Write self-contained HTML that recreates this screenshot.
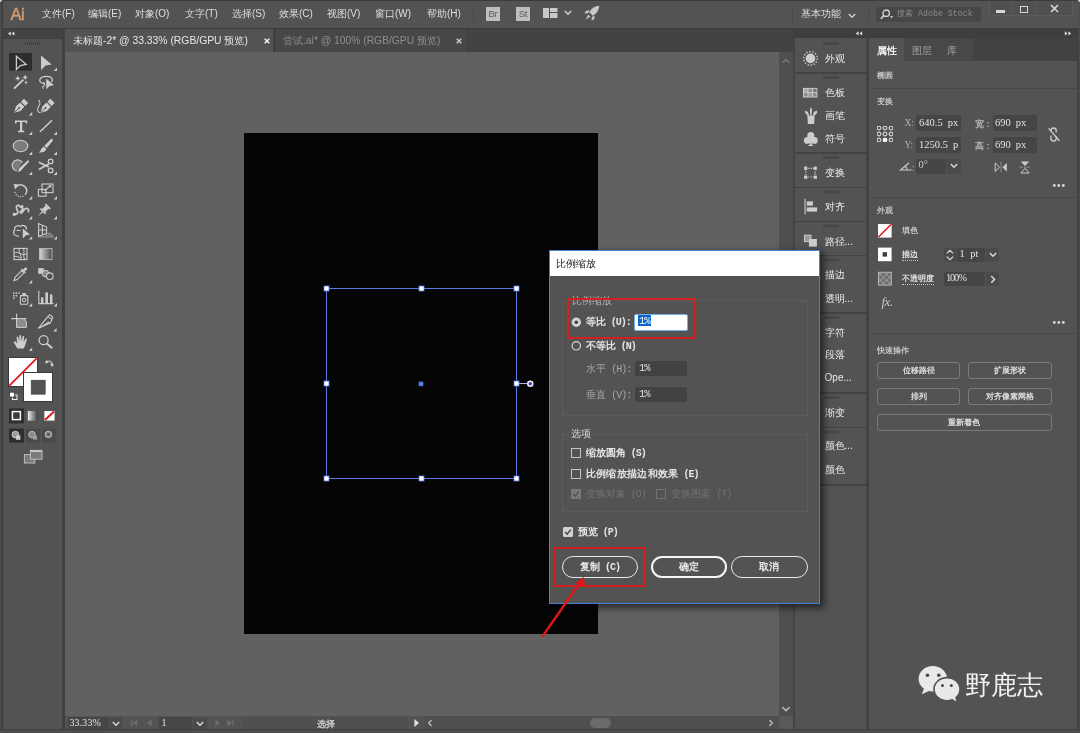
<!DOCTYPE html>
<html lang="zh">
<head>
<meta charset="utf-8">
<title>Illustrator - Scale</title>
<style>
*{box-sizing:border-box;margin:0;padding:0}
html,body{width:1080px;height:733px;overflow:hidden;background:#535353}
body{font-family:"Liberation Sans",sans-serif;font-size:11px;color:#d9d9d9;position:relative}
.a{position:absolute}
.t{position:absolute;white-space:nowrap;line-height:14px;height:14px;overflow:visible}
.sf{font-family:"Liberation Serif",serif}
.mono{font-family:"Liberation Mono",monospace}
#app{position:absolute;left:0;top:0;width:1080px;height:733px;background:transparent;overflow:hidden;will-change:transform}
/* menu */
#menubar{left:0;top:0;width:1080px;height:28px;background:#535353}
#menubar .t{top:7px;font-size:10px;color:#dedede}
/* tab bar */
#tabbar{left:65px;top:29px;width:728.200px;height:23.200px;background:#434343}
.tab{position:absolute;top:0;height:24px}
/* canvas */
#canvas{left:65px;top:52px;width:714px;height:664px;background:#616161}
#artboard{left:244px;top:133px;width:354px;height:501px;background:#050505}
/* toolbar */
#tools{left:3px;top:29px;width:60px;height:699px;background:#535353}
/* panels */
#iconpanel{left:794.500px;top:38px;width:71.500px;height:691px;background:#535353}
#props{left:869px;top:38px;width:208px;height:691px;background:#535353}
.sep{position:absolute;height:1px;background:#474747}
.fld{position:absolute;background:#454545;border-radius:2px}
.btn{position:absolute;border:1px solid #7a7a7a;border-radius:3px;height:17px;line-height:15px;text-align:center;font-size:8px;font-weight:bold;color:#e0e0e0;white-space:nowrap;overflow:hidden}

.hw{font-family:"Liberation Mono",monospace;font-size:10px;letter-spacing:-1px}
#dlgC .t{font-size:10.200px;font-weight:bold;color:#e4e4e4}
.cb{position:absolute;width:10px;height:10px;border:1px solid #c4c4c4}
.pill{position:absolute;height:21.500px;border-radius:11px;border:1.300px solid #e8e8e8;text-align:center;line-height:19px;font-size:10.200px;font-weight:bold;color:#e8e8e8;white-space:nowrap}
.gb{position:absolute;border:1px solid #5c5c5c}
/* dialog */
#dlg{left:549px;top:250px;width:271px;height:353.500px;background:#535353;border:1px solid #3b86cf;box-shadow:3px 3px 7px 1px rgba(0,0,0,.55)}
#dlgtitle{left:0;top:0;width:269px;height:25px;background:#ffffff}
</style>
</head>
<body>
<div id="app">

<!-- ============ MENU BAR ============ -->
<div id="menubar" class="a">

<div class="t" style="left:10.500px;top:5px;font-size:16.500px;line-height:18px;height:18px;color:#cf9d70;letter-spacing:-0.600px;-webkit-text-stroke:0.450px #cf9d70">Ai</div>
<div class="t" style="left:42px">文件(F)</div>
<div class="t" style="left:88px">编辑(E)</div>
<div class="t" style="left:135px">对象(O)</div>
<div class="t" style="left:185px">文字(T)</div>
<div class="t" style="left:232px">选择(S)</div>
<div class="t" style="left:279px">效果(C)</div>
<div class="t" style="left:327px">视图(V)</div>
<div class="t" style="left:375px">窗口(W)</div>
<div class="t" style="left:427px">帮助(H)</div>
<div class="a" style="left:473px;top:7px;width:1px;height:15px;background:#484848"></div>
<div class="a" style="left:486px;top:7px;width:14px;height:14px;background:#bebebe;color:#5a5a5a;font-size:9.500px;line-height:14px;text-align:center;letter-spacing:-0.300px">Br</div>
<div class="a" style="left:516px;top:7px;width:14px;height:14px;background:#bebebe;color:#5a5a5a;font-size:9.500px;line-height:14px;text-align:center;letter-spacing:-0.300px">St</div>
<svg class="a" style="left:543px;top:8px" width="15" height="10" viewBox="0 0 15 10"><rect x="0" y="0" width="6" height="10" fill="#c8c8c8"/><rect x="7" y="0" width="7.5" height="4" fill="#c8c8c8"/><rect x="7" y="5" width="7.5" height="5" fill="#c8c8c8"/></svg>
<svg class="a" style="left:564px;top:10px" width="8" height="6" viewBox="0 0 8 6"><path d="M0.8 1 L4 4.2 L7.2 1" fill="none" stroke="#d0d0d0" stroke-width="1.5"/></svg>
<svg class="a" style="left:584px;top:5px" width="16" height="16" viewBox="0 0 16 16"><path d="M15.2 0.8 C11 1 7.5 3 5.2 7.2 L8.8 10.8 C13 8.5 15 5 15.2 0.8 Z" fill="#c8c8c8"/><path d="M5.6 5.2 L1.8 6 L0.6 8.4 L4 8.2 Z" fill="#c8c8c8"/><path d="M10.8 10.4 L10 14.2 L7.6 15.4 L7.8 12 Z" fill="#c8c8c8"/><path d="M4.3 9.6 L1.6 14.4 L6.4 11.7 Z" fill="#c8c8c8"/></svg>
<div class="a" style="left:792px;top:7px;width:1px;height:15px;background:#484848"></div>
<div class="t" style="left:801px">基本功能</div>
<svg class="a" style="left:848px;top:13px" width="8" height="6" viewBox="0 0 8 6"><path d="M0.8 1 L4 4.2 L7.2 1" fill="none" stroke="#d0d0d0" stroke-width="1.5"/></svg>
<div class="a" style="left:868px;top:7px;width:1px;height:15px;background:#484848"></div>
<div class="a" style="left:876px;top:7px;width:105px;height:15px;background:#474747;border-radius:2px"></div>
<svg class="a" style="left:880px;top:9px" width="14" height="11" viewBox="0 0 14 11"><circle cx="6.2" cy="4.2" r="3.2" fill="none" stroke="#d0d0d0" stroke-width="1.4"/><path d="M3.8 6.6 L0.8 9.8" stroke="#d0d0d0" stroke-width="1.6" fill="none"/><path d="M9.8 7.2 L13.4 7.2 L11.6 9.2 Z" fill="#d0d0d0"/></svg>
<div class="t mono" style="left:897px;top:7px;font-size:8.3px;color:#8a8a8a">搜索 Adobe Stock</div>
<div class="a" style="left:989px;top:1px;width:83.500px;height:15px;border:1px solid #5b5b5b;border-top:none;background:#505050"></div><div class="a" style="left:1012px;top:1px;width:1px;height:14px;background:#5b5b5b"></div><div class="a" style="left:1036px;top:1px;width:1px;height:14px;background:#5b5b5b"></div>
<div class="a" style="left:996px;top:10.200px;width:9px;height:2.400px;background:#d6d6d6"></div>
<div class="a" style="left:1019.500px;top:6px;width:8.500px;height:6.500px;border:1.500px solid #d6d6d6"></div>
<svg class="a" style="left:1050px;top:4px" width="9" height="9" viewBox="0 0 9 9"><path d="M1 1 L8 8 M8 1 L1 8" stroke="#d6d6d6" stroke-width="1.7" fill="none"/></svg>

</div>
<div class="a" style="left:0;top:28px;width:1080px;height:1px;background:#3c3c3c"></div>

<!-- ============ TAB BAR ============ -->
<div id="tabbar" class="a">

<div class="tab" style="left:0;width:208px;background:#535353"></div>
<div class="t" style="left:8px;top:5px;font-size:10.35px;color:#e6e6e6">未标题-2* @ 33.33% (RGB/GPU 预览)</div>
<svg class="a" style="left:199px;top:9px" width="6" height="6" viewBox="0 0 6 6"><path d="M0.7 0.7 L5.3 5.3 M5.3 0.7 L0.7 5.3" stroke="#f0f0f0" stroke-width="1.5" fill="none"/></svg>
<div class="tab" style="left:208.500px;width:194.500px;background:#474747;border-left:1px solid #3c3c3c;border-right:1px solid #3c3c3c"></div>
<div class="t" style="left:218px;top:5px;font-size:10.3px;color:#8e8e8e">尝试.ai* @ 100% (RGB/GPU 预览)</div>
<svg class="a" style="left:391px;top:9px" width="6" height="6" viewBox="0 0 6 6"><path d="M0.7 0.7 L5.3 5.3 M5.3 0.7 L0.7 5.3" stroke="#c8c8c8" stroke-width="1.5" fill="none"/></svg>

</div>

<!-- ============ CANVAS ============ -->
<div id="canvas" class="a"></div>
<div id="artboard" class="a"></div>

<svg class="a" style="left:320px;top:282px" width="220" height="204" viewBox="320 282 220 204">
<rect x="326.5" y="288.5" width="190.0" height="190.0" fill="none" stroke="#5a78e6" stroke-width="1"/>
<path d="M519.0 383.5 H527.500" stroke="#a8b4e8" stroke-width="1"/>
<rect x="324.0" y="286.0" width="5" height="5" fill="#fff" stroke="#5a78e6" stroke-width="0.800"/><rect x="419.0" y="286.0" width="5" height="5" fill="#fff" stroke="#5a78e6" stroke-width="0.800"/><rect x="514.0" y="286.0" width="5" height="5" fill="#fff" stroke="#5a78e6" stroke-width="0.800"/><rect x="324.0" y="381.0" width="5" height="5" fill="#fff" stroke="#5a78e6" stroke-width="0.800"/><rect x="514.0" y="381.0" width="5" height="5" fill="#fff" stroke="#5a78e6" stroke-width="0.800"/><rect x="324.0" y="476.0" width="5" height="5" fill="#fff" stroke="#5a78e6" stroke-width="0.800"/><rect x="419.0" y="476.0" width="5" height="5" fill="#fff" stroke="#5a78e6" stroke-width="0.800"/><rect x="514.0" y="476.0" width="5" height="5" fill="#fff" stroke="#5a78e6" stroke-width="0.800"/>
<rect x="418.600" y="381.400" width="4.800" height="4.800" rx="1.500" fill="#5878ee"/>
<circle cx="530.300" cy="383.800" r="2.500" fill="#3048b0" stroke="#f0f0ff" stroke-width="1.500"/>
</svg>


<!-- ============ SCROLLBARS / STATUS ============ -->

<!-- vertical scrollbar -->
<div class="a" style="left:779px;top:52px;width:14.300px;height:664px;background:#4f4f4f"></div>
<svg class="a" style="left:781px;top:58px" width="10" height="6" viewBox="0 0 10 6"><path d="M1.800 4.600 L5 1.600 L8.200 4.600" fill="none" stroke="#7c7c7c" stroke-width="1.400"/></svg>
<svg class="a" style="left:781px;top:706px" width="10" height="6" viewBox="0 0 10 6"><path d="M1.400 1.200 L5 4.600 L8.600 1.200" fill="none" stroke="#bdbdbd" stroke-width="1.500"/></svg>
<!-- status bar -->
<div class="a" style="left:65px;top:716px;width:714px;height:13px;background:#535353"></div>
<div class="a" style="left:779px;top:715.500px;width:14.200px;height:13px;background:#595959"></div>
<div class="fld" style="left:67.500px;top:716.500px;width:41.500px;height:12.500px;background:#474747;border-radius:1px"></div>
<div class="t sf" style="left:69.500px;top:716px;font-size:10px;color:#e0e0e0;letter-spacing:0.100px">33.33%</div>
<div class="fld" style="left:110px;top:716.500px;width:11.500px;height:12.500px;background:#4a4a4a;border-radius:1px"></div>
<svg class="a" style="left:112px;top:721px" width="8" height="6" viewBox="0 0 8 6"><path d="M0.800 1 L4 4.200 L7.200 1" fill="none" stroke="#d8d8d8" stroke-width="1.500"/></svg>
<svg class="a" style="left:129px;top:718px" width="26" height="10" viewBox="0 0 26 10" fill="#6c6c6c"><rect x="2" y="1.500" width="1.400" height="7"/><path d="M8.200 1.500 V8.500 L3.800 5 Z"/><path d="M22.600 1.500 V8.500 L18.200 5 Z"/></svg>
<div class="fld" style="left:158.500px;top:716.500px;width:33.500px;height:12.500px;background:#474747;border-radius:1px"></div>
<div class="t sf" style="left:161.500px;top:716px;font-size:10px;color:#e0e0e0">1</div>
<div class="fld" style="left:193px;top:716.500px;width:14px;height:12.500px;background:#4a4a4a;border-radius:1px"></div>
<svg class="a" style="left:196px;top:721px" width="8" height="6" viewBox="0 0 8 6"><path d="M0.800 1 L4 4.200 L7.200 1" fill="none" stroke="#d8d8d8" stroke-width="1.500"/></svg>
<svg class="a" style="left:212px;top:718px" width="26" height="10" viewBox="0 0 26 10" fill="#6c6c6c"><path d="M3.400 1.500 V8.500 L7.800 5 Z"/><path d="M15.400 1.500 V8.500 L19.800 5 Z"/><rect x="20.400" y="1.500" width="1.400" height="7"/></svg>
<div class="a" style="left:242.500px;top:716.500px;width:165px;height:12.500px;background:#4f4f4f"></div>
<div class="t" style="left:316.500px;top:716.500px;font-size:8.500px;font-weight:bold;color:#d0d0d0">选择</div>
<svg class="a" style="left:413px;top:718px" width="7" height="10" viewBox="0 0 7 10"><path d="M1.400 1 V9 L6 5 Z" fill="#e0e0e0"/></svg>
<!-- horizontal scrollbar -->
<div class="a" style="left:424px;top:716px;width:355px;height:13px;background:#4f4f4f"></div>
<svg class="a" style="left:427px;top:718.500px" width="6" height="8" viewBox="0 0 6 8"><path d="M4.600 1 L1.600 4 L4.600 7" fill="none" stroke="#bdbdbd" stroke-width="1.300"/></svg>
<svg class="a" style="left:768px;top:718.500px" width="6" height="8" viewBox="0 0 6 8"><path d="M1.400 1 L4.400 4 L1.400 7" fill="none" stroke="#bdbdbd" stroke-width="1.300"/></svg>
<div class="a" style="left:589.500px;top:718px;width:21.500px;height:9.500px;border-radius:5px;background:#6b6b6b"></div>


<!-- ============ TOOLBAR ============ -->
<div class="a" style="left:3px;top:29px;width:60px;height:10px;background:#424242"></div>
<div id="tools" class="a" style="top:39px;height:689px">

</div>
<div class="a" style="left:62px;top:29px;width:3px;height:700px;background:#404040"></div>
<svg class="a" style="left:0;top:29px" width="66" height="460" viewBox="0 29 66 460">
<g fill="#cdcdcd" stroke="none">
<!-- header chevrons -->
<path d="M10.800 31.400 V35.800 L8 33.600 Z M14.400 31.400 V35.800 L11.600 33.600 Z" fill="#dcdcdc"/>
<!-- grip -->
<g fill="#3c3c3c"><rect x="25" y="42" width="1" height="3"/><rect x="27" y="42" width="1" height="3"/><rect x="29" y="42" width="1" height="3"/><rect x="31" y="42" width="1" height="3"/><rect x="33" y="42" width="1" height="3"/><rect x="35" y="42" width="1" height="3"/><rect x="37" y="42" width="1" height="3"/><rect x="39" y="42" width="1" height="3"/></g>
<!-- row1: selection (active) + direct selection -->
<rect x="9" y="53" width="23" height="17.6" fill="#2d2d2d"/>
<path d="M16.4 56.2 L26.2 64.3 L20.4 65.6 L16.4 69.4 Z" fill="none" stroke="#cdcdcd" stroke-width="1.3" stroke-linejoin="miter"/>
<path d="M41 55.6 L51.6 64.4 L45.6 65.6 L41 70 Z"/>
<path d="M57 67.6 L57 71 L53.6 71 Z" fill="#cdcdcd"/>
<!-- row2: magic wand + lasso -->
<path d="M14 88.6 L23.4 79.6" stroke="#cdcdcd" stroke-width="2" fill="none"/>
<path d="M17.8 75.6 l0.8 2 l2 0.8 l-2 0.8 l-0.8 2 l-0.8 -2 l-2 -0.8 l2 -0.8 Z"/>
<path d="M25.2 74.6 l0.8 2 l2 0.8 l-2 0.8 l-0.8 2 l-0.8 -2 l-2 -0.8 l2 -0.8 Z"/>
<path d="M26 80.6 l0.6 1.3 l1.3 0.6 l-1.3 0.6 l-0.6 1.3 l-0.6 -1.3 l-1.3 -0.6 l1.3 -0.6 Z"/>
<path d="M45 83.6 C41 83.6 39.4 81.6 39.8 79.8 C40.4 77.2 43.4 76.4 46.2 76.4 C49.6 76.4 52.4 77.6 52.4 80 C52.4 81 52 81.6 51.4 82" fill="none" stroke="#cdcdcd" stroke-width="1.3"/>
<path d="M43.2 82.2 C45 83 45 85.4 43.4 86.2 C42.6 86.6 42.4 87.6 43.4 88.6" fill="none" stroke="#cdcdcd" stroke-width="1.1"/>
<path d="M46.2 78.4 L54 85.2 L49.6 86 L46.2 89.6 Z"/>
<!-- row3: pen + curvature pen -->
<g transform="translate(14.2 112.8) rotate(-45)">
<path d="M0 0 L5.6 -3.2 L11.4 -3 L11.4 3 L5.6 3.2 Z"/>
<rect x="12.6" y="-3" width="4.2" height="6"/>
<path d="M0.8 0 L6.2 0" stroke="#535353" stroke-width="0.9"/><circle cx="6.8" cy="0" r="1" fill="#535353"/>
</g>
<path d="M32.2 112.0 L32.2 115.4 L28.800000000000004 115.4 Z" fill="#cdcdcd"/>
<g transform="translate(40.6 112.8) rotate(-45)">
<path d="M0 0 L5.6 -3.2 L11.4 -3 L11.4 3 L5.6 3.2 Z"/>
<rect x="12.6" y="-3" width="4.2" height="6"/>
<path d="M0.8 0 L6.2 0" stroke="#535353" stroke-width="0.9"/><circle cx="6.8" cy="0" r="1" fill="#535353"/>
</g>
<path d="M38.4 99.8 C41.4 102.8 39.6 105 38.2 107.4 C36.8 110 37.6 112.4 40.4 112.8" fill="none" stroke="#cdcdcd" stroke-width="1.1"/>
<!-- row4: type + line -->
<path d="M15 120.4 H27.2 V123.6 H26 L25.4 122 H22.2 V130.4 L24.2 130.8 V132.2 H18 V130.8 L20 130.4 V122 H16.8 L16.2 123.6 H15 Z"/>
<path d="M32.2 131.6 L32.2 135 L28.800000000000004 135 Z" fill="#cdcdcd"/>
<path d="M40 131.8 L52 120.2" stroke="#cdcdcd" stroke-width="1.5" fill="none"/>
<path d="M57 131.6 L57 135 L53.6 135 Z" fill="#cdcdcd"/>
<!-- row5: ellipse + brush -->
<ellipse cx="20.5" cy="146" rx="7.3" ry="5.8" fill="#7c7c7c" stroke="#cdcdcd" stroke-width="1.1"/>
<path d="M32.2 151.6 L32.2 155 L28.800000000000004 155 Z" fill="#cdcdcd"/>
<path d="M52.2 138.8 C53 139.6 53 140.4 52.4 141.2 L46.8 148 L44.4 145.8 L51 139 C51.4 138.6 51.8 138.6 52.2 138.8 Z"/>
<path d="M43.8 146.6 L46.2 148.8 C46 151.4 43.6 152.6 38.6 152.6 C41 151.2 41 148.2 43.8 146.6 Z"/>
<path d="M57 151.6 L57 155 L53.6 155 Z" fill="#cdcdcd"/>
<!-- row6: shaper + scissors -->
<path d="M22.4 162.4 A5.6 5.6 0 1 0 17 171" fill="#7c7c7c" stroke="#cdcdcd" stroke-width="1.2"/>
<path d="M18 172.4 L19 168.6 L27.6 160.4 C28.4 159.8 29.6 161 29 161.8 L20.8 170.8 Z"/>
<path d="M32.2 171.6 L32.2 175 L28.800000000000004 175 Z" fill="#cdcdcd"/>
<path d="M38.8 162.2 L48.8 167 M38.8 169.4 L48.8 164" stroke="#cdcdcd" stroke-width="1.7" fill="none"/>
<circle cx="50.6" cy="161.4" r="2.3" fill="none" stroke="#cdcdcd" stroke-width="1.3"/>
<circle cx="50.6" cy="170.4" r="2.3" fill="none" stroke="#cdcdcd" stroke-width="1.3"/>
<path d="M57 171.6 L57 175 L53.6 175 Z" fill="#cdcdcd"/>
<!-- row7: rotate + scale -->
<path d="M16.6 186.4 A6.2 6.2 0 0 1 26.8 190.4 A6.2 6.2 0 0 1 25 194.8" fill="none" stroke="#cdcdcd" stroke-width="1.5"/>
<path d="M13.6 184 L19 184.4 L15.2 189.4 Z"/>
<path d="M14.8 192 A6.2 6.2 0 0 0 24 195.8" fill="none" stroke="#cdcdcd" stroke-width="1.3" stroke-dasharray="1.2 1.2"/>
<path d="M32.2 196.0 L32.2 199.4 L28.800000000000004 199.4 Z" fill="#cdcdcd"/>
<rect x="42" y="184" width="11" height="8.6" fill="none" stroke="#cdcdcd" stroke-width="1.1"/>
<rect x="38.4" y="189.4" width="7.6" height="6.8" fill="none" stroke="#cdcdcd" stroke-width="1.1"/>
<path d="M44.6 190.8 L50 186" stroke="#cdcdcd" stroke-width="1.1" fill="none"/><path d="M51.4 184.8 L51 188 L48.4 185.4 Z"/>
<path d="M57 196.0 L57 199.4 L53.6 199.4 Z" fill="#cdcdcd"/>
<!-- row8: width + pin -->
<path d="M14.8 214 C17.6 214.4 18.4 212.6 17.4 210.4 C16.2 207.6 15.6 205.6 18 205.4 C20 205.2 20.2 207.4 21.6 207.6 C23.4 207.8 23.2 209.8 21.2 210.8 C19.4 211.8 20.2 213.8 22 212.6 C23.8 211.2 23.8 208.6 26.2 208.4 C28.4 208.2 28.8 210 28.4 212.4" fill="none" stroke="#cdcdcd" stroke-width="1.7"/>
<rect x="12.8" y="213" width="2.8" height="2.8"/>
<circle cx="22.2" cy="206.2" r="1.2"/>
<path d="M32.2 216.0 L32.2 219.4 L28.800000000000004 219.4 Z" fill="#cdcdcd"/>
<g transform="translate(38.2 216) rotate(-45)">
<path d="M0 0 L6 -0.8 L6 0.8 Z"/><rect x="6" y="-3.6" width="1.8" height="7.2"/><rect x="7.8" y="-2.2" width="4.6" height="4.4"/><rect x="12.4" y="-3.4" width="2" height="6.8"/>
</g>
<path d="M57 216.0 L57 219.4 L53.6 219.4 Z" fill="#cdcdcd"/>
<!-- row9: shape builder + perspective grid -->
<path d="M19 236 C14 236.6 12.4 232.6 14.6 230 C13.8 226.600 18 224.600 20.4 226.400 C23 224.200 27 226.200 26.400 229.600" fill="none" stroke="#cdcdcd" stroke-width="1.2"/>
<path d="M16.600 230.400 H20.600" stroke="#cdcdcd" stroke-width="1" fill="none"/>
<path d="M22.800 228.400 L30 234.400 L26 235.200 L22.800 238.600 Z"/>
<path d="M32.2 236.2 L32.2 239.6 L28.800000000000004 239.6 Z" fill="#cdcdcd"/>
<path d="M38.600 223.600 V236.600 L46.600 233.200 V227 Z M38.600 230 L46.600 230 M42.400 225.400 V234.800" fill="none" stroke="#cdcdcd" stroke-width="1.1"/>
<path d="M47 233.400 H51 M45 235.200 H53 M40 237 H54" stroke="#a8a8a8" stroke-width="0.9" fill="none"/>
<path d="M57 236.2 L57 239.6 L53.6 239.6 Z" fill="#cdcdcd"/>
<!-- row10: mesh + gradient -->
<rect x="14" y="248.400" width="13" height="11.200" fill="none" stroke="#cdcdcd" stroke-width="1.1"/>
<path d="M14 253 C18 250.400 22 256.800 27 253.600 M19.600 248.400 C17.200 252.400 22.800 255.600 20.600 259.600 M23.400 248.400 C25.200 251.200 22.400 255.200 24.600 259.600 M14 256.600 C17 255.200 18.400 258 20.600 257.400" fill="none" stroke="#cdcdcd" stroke-width="1"/>
<rect x="39.400" y="248.600" width="12.600" height="10.800" fill="url(#gr1)" stroke="#bdbdbd" stroke-width="0.9"/>
<!-- row11: eyedropper + blend -->
<path d="M14 280.600 L15 277.400 L21.800 270.600 L24 272.800 L17.200 279.600 Z" fill="none" stroke="#cdcdcd" stroke-width="1.1"/>
<path d="M21 269.400 L25.200 273.600 L26 272.800 L24.800 271.600 L27 269.400 C27.800 268.400 26.200 266.800 25.200 267.600 L23 269.800 L21.800 268.600 Z"/>
<path d="M32.2 280.0 L32.2 283.4 L28.800000000000004 283.4 Z" fill="#cdcdcd"/>
<rect x="38.200" y="268.200" width="5.600" height="5.600"/>
<circle cx="45.400" cy="273.600" r="3.300" fill="#8a8a8a" stroke="#cdcdcd" stroke-width="1"/>
<circle cx="49.800" cy="276.200" r="3.300" fill="#535353" stroke="#cdcdcd" stroke-width="1.1"/>
<!-- row12: symbol sprayer + graph -->
<rect x="20.400" y="295.600" width="7.400" height="8.600" rx="0.800" fill="none" stroke="#cdcdcd" stroke-width="1.1"/>
<rect x="22.400" y="293" width="3.400" height="2"/>
<circle cx="24.100" cy="300" r="1.800" fill="none" stroke="#cdcdcd" stroke-width="1"/>
<g><rect x="13" y="292.400" width="1.500" height="1.500"/><rect x="15.600" y="292.400" width="1.500" height="1.500"/><rect x="18.200" y="292.400" width="1.500" height="1.500"/><rect x="13" y="295" width="1.500" height="1.500"/><rect x="15.600" y="295" width="1.500" height="1.500"/><rect x="13" y="297.600" width="1.500" height="1.500"/></g>
<path d="M32.2 303.0 L32.2 306.4 L28.800000000000004 306.4 Z" fill="#cdcdcd"/>
<path d="M38.800 290.800 V303.600 H53.400" fill="none" stroke="#cdcdcd" stroke-width="1.100"/>
<rect x="41" y="297.400" width="2.400" height="6"/><rect x="45.400" y="292.400" width="2.600" height="11"/><rect x="50" y="294.400" width="2.400" height="9"/>
<path d="M57 303.0 L57 306.4 L53.6 306.4 Z" fill="#cdcdcd"/>
<!-- row13: artboard + slice -->
<path d="M16.600 313.800 V327.400 M11.200 318.600 H26.400" stroke="#cdcdcd" stroke-width="1.100" fill="none"/>
<path d="M16.600 318.600 H23.400 L26.400 321.600 V327.400 H16.600 Z" fill="#8c8c8c" stroke="#cdcdcd" stroke-width="1"/>
<path d="M38.600 328.200 L47.800 316.600 L52 319.400 L50.200 323 Z M47.800 316.600 L49.600 314.600 L52.600 316.800 L52 319.400" fill="none" stroke="#cdcdcd" stroke-width="1.100" stroke-linejoin="round"/>
<path d="M38.600 328.200 L50.200 323 L48.400 321.400 Z"/>
<path d="M56.6 328.0 L56.6 331.4 L53.2 331.4 Z" fill="#cdcdcd"/>
<!-- row14: hand + zoom -->
<path d="M17.400 348.400 C16 346 14.400 343.600 13.800 342.400 C13.400 341.400 14.600 340.800 15.400 341.600 L17.200 343.600 L16.600 337.400 C16.600 336.200 18.200 336.200 18.400 337.400 L19.200 341.400 L19.400 335.800 C19.400 334.600 21.200 334.600 21.200 335.800 L21.400 341.400 L22.600 336.600 C22.800 335.400 24.400 335.800 24.200 337 L23.600 342 L25.400 339 C26 338 27.400 338.600 26.800 339.800 C25.800 342.600 25.400 346 23.600 348.400 Z"/>
<path d="M32.2 347.6 L32.2 351 L28.800000000000004 351 Z" fill="#cdcdcd"/>
<circle cx="43.600" cy="340.200" r="4.500" fill="none" stroke="#cdcdcd" stroke-width="1.300"/>
<path d="M46.800 343.400 L52.200 348.200" stroke="#cdcdcd" stroke-width="2" fill="none"/>
</g>
<defs><linearGradient id="gr1" x1="0" y1="0" x2="1" y2="0"><stop offset="0" stop-color="#d8d8d8"/><stop offset="1" stop-color="#4a4a4a"/></linearGradient>
<linearGradient id="gr2" x1="0" y1="0" x2="1" y2="0"><stop offset="0" stop-color="#f0f0f0"/><stop offset="1" stop-color="#3a3a3a"/></linearGradient></defs>
<!-- fill / stroke swatches -->
<rect x="8.500" y="357.500" width="29" height="29" fill="#ffffff" stroke="#3a3a3a" stroke-width="1"/>
<path d="M9.400 385.600 L36.600 358.400" stroke="#e0191c" stroke-width="1.800" fill="none"/>
<rect x="23.500" y="372.500" width="29" height="29" fill="#ffffff" stroke="#3a3a3a" stroke-width="1"/>
<rect x="31.200" y="380.200" width="14" height="14" fill="#535353" stroke="#3a3a3a" stroke-width="0.600"/>
<!-- swap arrows -->
<path d="M46.600 362.400 C47.600 360.400 50.400 360.600 51.400 362.600 L52 364.400" fill="none" stroke="#cdcdcd" stroke-width="1.200"/>
<path d="M45 363.400 L46.400 359.800 L48.800 362.800 Z" fill="#cdcdcd"/><path d="M50 364.200 L53.800 363.600 L52.400 367.200 Z" fill="#cdcdcd"/>
<!-- default colors mini -->
<rect x="12.500" y="395" width="4.500" height="4.500" fill="#535353" stroke="#f0f0f0" stroke-width="1"/>
<rect x="9.600" y="392.200" width="4.800" height="4.800" fill="#ffffff" stroke="#2d2d2d" stroke-width="0.700"/>
<!-- color mode row -->
<rect x="9" y="408.400" width="15" height="15" fill="#2d2d2d"/>
<rect x="12.400" y="411.600" width="8" height="8" fill="#3a3a3a" stroke="#f4f4f4" stroke-width="1.500"/>
<rect x="27.800" y="411" width="10.200" height="9.600" fill="url(#gr2)"/>
<rect x="44.400" y="411" width="10.200" height="9.600" fill="#ffffff"/>
<path d="M45 420 L54 411.600" stroke="#e0191c" stroke-width="2" fill="none"/>
<!-- draw modes -->
<rect x="9" y="428.600" width="15" height="14" fill="#2d2d2d"/>
<rect x="26" y="428.600" width="14" height="14" fill="#4a4a4a"/><rect x="42" y="428.600" width="14" height="14" fill="#4a4a4a"/>
<circle cx="15.400" cy="434.600" r="3.300" fill="#9a9a9a" stroke="#cdcdcd" stroke-width="1"/><rect x="16" y="435.400" width="4.400" height="4.400" fill="#cdcdcd"/>
<circle cx="32" cy="434.600" r="3.300" fill="#8a8a8a" stroke="#b8b8b8" stroke-width="1"/><rect x="33" y="435.600" width="4" height="4" fill="#9c9c9c"/>
<circle cx="48.400" cy="434.400" r="3.300" fill="#8a8a8a" stroke="#b8b8b8" stroke-width="1"/><circle cx="48.400" cy="434.400" r="1.300" fill="#555"/>
<!-- screen mode -->
<rect x="24.400" y="454.600" width="10.400" height="8.400" fill="#7a7a7a" stroke="#bdbdbd" stroke-width="1"/>
<rect x="30.400" y="450.400" width="11.600" height="8.800" fill="#7a7a7a" stroke="#bdbdbd" stroke-width="1"/>
<path d="M30.400 451.200 H42" stroke="#cfcfcf" stroke-width="1.400"/>
</svg>


<!-- ============ RIGHT PANELS ============ -->
<div class="a" style="left:793.200px;top:29px;width:287px;height:9.600px;background:#3e3e3e"></div>
<div class="a" style="left:793.200px;top:38px;width:1.400px;height:691px;background:#444"></div>
<div id="iconpanel" class="a">
<div class="a" style="left:0;top:34.0px;width:72px;height:1.5px;background:#424242"></div>
<div class="a" style="left:0;top:114.0px;width:72px;height:1.5px;background:#424242"></div>
<div class="a" style="left:0;top:148.5px;width:72px;height:1.5px;background:#424242"></div>
<div class="a" style="left:0;top:182.5px;width:72px;height:1.5px;background:#424242"></div>
<div class="a" style="left:0;top:216.5px;width:72px;height:1.5px;background:#424242"></div>
<div class="a" style="left:0;top:274.0px;width:72px;height:1.5px;background:#424242"></div>
<div class="a" style="left:0;top:354.0px;width:72px;height:1.5px;background:#424242"></div>
<div class="a" style="left:0;top:388.5px;width:72px;height:1.5px;background:#424242"></div>
<div class="a" style="left:0;top:446.0px;width:72px;height:1.5px;background:#424242"></div>
<div class="t" style="left:30.100px;top:13.5px;font-size:10px;color:#ececec">外观</div>
<div class="t" style="left:30.100px;top:47.5px;font-size:10px;color:#ececec">色板</div>
<div class="t" style="left:30.100px;top:70.7px;font-size:10px;color:#ececec">画笔</div>
<div class="t" style="left:30.100px;top:94.3px;font-size:10px;color:#ececec">符号</div>
<div class="t" style="left:30.100px;top:128.0px;font-size:10px;color:#ececec">变换</div>
<div class="t" style="left:30.100px;top:162.0px;font-size:10px;color:#ececec">对齐</div>
<div class="t" style="left:30.100px;top:196.5px;font-size:10px;color:#ececec">路径...</div>
<div class="t" style="left:30.100px;top:230.4px;font-size:10px;color:#ececec">描边</div>
<div class="t" style="left:30.100px;top:253.5px;font-size:10px;color:#ececec">透明...</div>
<div class="t" style="left:30.100px;top:288.0px;font-size:10px;color:#ececec">字符</div>
<div class="t" style="left:30.100px;top:310.0px;font-size:10px;color:#ececec">段落</div>
<div class="t" style="left:30.100px;top:333.0px;font-size:10px;color:#ececec">Ope...</div>
<div class="t" style="left:30.100px;top:367.7px;font-size:10px;color:#ececec">渐变</div>
<div class="t" style="left:30.100px;top:401.0px;font-size:10px;color:#ececec">颜色...</div>
<div class="t" style="left:30.100px;top:425.0px;font-size:10px;color:#ececec">颜色</div>
<svg class="a" style="left:0;top:0" width="72" height="460" viewBox="794.5 38 72 460">
<g fill="#3c3c3c"><rect x="823" y="42" width="1" height="3"/><rect x="825" y="42" width="1" height="3"/><rect x="827" y="42" width="1" height="3"/><rect x="829" y="42" width="1" height="3"/><rect x="831" y="42" width="1" height="3"/><rect x="833" y="42" width="1" height="3"/><rect x="835" y="42" width="1" height="3"/><rect x="837" y="42" width="1" height="3"/></g><g fill="#3c3c3c"><rect x="823" y="76" width="1" height="3"/><rect x="825" y="76" width="1" height="3"/><rect x="827" y="76" width="1" height="3"/><rect x="829" y="76" width="1" height="3"/><rect x="831" y="76" width="1" height="3"/><rect x="833" y="76" width="1" height="3"/><rect x="835" y="76" width="1" height="3"/><rect x="837" y="76" width="1" height="3"/></g><g fill="#3c3c3c"><rect x="823" y="156" width="1" height="3"/><rect x="825" y="156" width="1" height="3"/><rect x="827" y="156" width="1" height="3"/><rect x="829" y="156" width="1" height="3"/><rect x="831" y="156" width="1" height="3"/><rect x="833" y="156" width="1" height="3"/><rect x="835" y="156" width="1" height="3"/><rect x="837" y="156" width="1" height="3"/></g><g fill="#3c3c3c"><rect x="823" y="190.5" width="1" height="3"/><rect x="825" y="190.5" width="1" height="3"/><rect x="827" y="190.5" width="1" height="3"/><rect x="829" y="190.5" width="1" height="3"/><rect x="831" y="190.5" width="1" height="3"/><rect x="833" y="190.5" width="1" height="3"/><rect x="835" y="190.5" width="1" height="3"/><rect x="837" y="190.5" width="1" height="3"/></g><g fill="#3c3c3c"><rect x="823" y="224.5" width="1" height="3"/><rect x="825" y="224.5" width="1" height="3"/><rect x="827" y="224.5" width="1" height="3"/><rect x="829" y="224.5" width="1" height="3"/><rect x="831" y="224.5" width="1" height="3"/><rect x="833" y="224.5" width="1" height="3"/><rect x="835" y="224.5" width="1" height="3"/><rect x="837" y="224.5" width="1" height="3"/></g><g fill="#3c3c3c"><rect x="823" y="258.5" width="1" height="3"/><rect x="825" y="258.5" width="1" height="3"/><rect x="827" y="258.5" width="1" height="3"/><rect x="829" y="258.5" width="1" height="3"/><rect x="831" y="258.5" width="1" height="3"/><rect x="833" y="258.5" width="1" height="3"/><rect x="835" y="258.5" width="1" height="3"/><rect x="837" y="258.5" width="1" height="3"/></g><g fill="#3c3c3c"><rect x="823" y="316" width="1" height="3"/><rect x="825" y="316" width="1" height="3"/><rect x="827" y="316" width="1" height="3"/><rect x="829" y="316" width="1" height="3"/><rect x="831" y="316" width="1" height="3"/><rect x="833" y="316" width="1" height="3"/><rect x="835" y="316" width="1" height="3"/><rect x="837" y="316" width="1" height="3"/></g><g fill="#3c3c3c"><rect x="823" y="396" width="1" height="3"/><rect x="825" y="396" width="1" height="3"/><rect x="827" y="396" width="1" height="3"/><rect x="829" y="396" width="1" height="3"/><rect x="831" y="396" width="1" height="3"/><rect x="833" y="396" width="1" height="3"/><rect x="835" y="396" width="1" height="3"/><rect x="837" y="396" width="1" height="3"/></g><g fill="#3c3c3c"><rect x="823" y="430.5" width="1" height="3"/><rect x="825" y="430.5" width="1" height="3"/><rect x="827" y="430.5" width="1" height="3"/><rect x="829" y="430.5" width="1" height="3"/><rect x="831" y="430.5" width="1" height="3"/><rect x="833" y="430.5" width="1" height="3"/><rect x="835" y="430.5" width="1" height="3"/><rect x="837" y="430.5" width="1" height="3"/></g>
<g fill="#cdcdcd">
<!-- appearance -->
<circle cx="810" cy="58.4" r="4.800"/>
<circle cx="810" cy="58.4" r="6.800" fill="none" stroke="#cdcdcd" stroke-width="1.400" stroke-dasharray="1.400 1.650"/>
<!-- swatches -->
<rect x="803" y="88.400" width="13.400" height="8.600" fill="#8a8a8a" stroke="#cdcdcd" stroke-width="1"/>
<rect x="803.500" y="88.900" width="4" height="3.600" fill="#a8a8a8"/><rect x="812" y="88.900" width="4" height="3.600" fill="#777"/><rect x="807.500" y="92.600" width="4.400" height="4" fill="#9c9c9c"/>
<path d="M803 92.600 H816.400 M807.500 88.400 V97 M812 88.400 V97" stroke="#cdcdcd" stroke-width="0.900" fill="none"/>
<!-- brushes -->
<path d="M806.800 115.400 H814.200 L813.600 124 H807.400 Z"/>
<path d="M810.400 107 L811.600 110 L811 115.400 H809.800 L809.400 110 Z"/>
<path d="M805 110.400 L807.400 112 L808.800 115.400 L806.800 115.400 L804.600 112.400 Z"/>
<path d="M816.400 110.600 L813.600 111.800 L812.200 115.400 L814.200 115.400 L816.800 112.800 Z"/>
<!-- club -->
<circle cx="810.300" cy="135.600" r="3.500"/><circle cx="806.800" cy="140.400" r="3.400"/><circle cx="813.800" cy="140.400" r="3.400"/>
<path d="M809.700 139 H810.900 L811.300 144.600 L813.400 146 H807.200 L809.300 144.600 Z"/>
<!-- transform -->
<rect x="805.400" y="168.400" width="9.200" height="8.600" fill="none" stroke="#cdcdcd" stroke-width="1.200" stroke-dasharray="1.200 1.200"/>
<rect x="803.600" y="166.600" width="3.200" height="3.200"/><rect x="813.200" y="166.600" width="3.200" height="3.200"/><rect x="803.600" y="175.600" width="3.200" height="3.200"/><rect x="813.200" y="175.600" width="3.200" height="3.200"/>
<!-- align -->
<rect x="804" y="198.800" width="1.100" height="15.600"/>
<rect x="806.200" y="201.400" width="6.200" height="4.200"/><rect x="806.200" y="207.400" width="10.400" height="4.200"/>
<!-- pathfinder -->
<rect x="804" y="235.200" width="6.400" height="6.400" fill="#9a9a9a" stroke="#cdcdcd" stroke-width="1"/>
<rect x="808.400" y="239" width="8" height="7.600"/>
</g>
</svg>
</div>
<div class="a" style="left:866px;top:38px;width:3px;height:691px;background:#424242"></div>
<div id="props" class="a">

</div>
<div class="a" style="left:1076.700px;top:29px;width:2px;height:704px;background:#424242"></div><div class="a" style="left:1078.600px;top:1px;width:1.400px;height:732px;background:#4d4d4d"></div>


<div id="propsC" class="a" style="left:0;top:0;width:1080px;height:733px">
<!-- tab strip -->
<div class="a" style="left:869px;top:38px;width:208px;height:23.200px;background:#424242"></div>
<div class="a" style="left:869px;top:38px;width:34.500px;height:23.200px;background:#535353"></div>
<div class="a" style="left:904px;top:39px;width:35.500px;height:22.200px;background:#484848"></div>
<div class="a" style="left:940px;top:39px;width:32.500px;height:22.200px;background:#484848"></div>
<div class="t" style="left:877px;top:43.500px;font-size:10px;color:#f0f0f0;font-weight:bold">属性</div>
<div class="t" style="left:911.500px;top:43.500px;font-size:10px;color:#a4a4a4">图层</div>
<div class="t" style="left:947px;top:43.500px;font-size:10px;color:#a4a4a4">库</div>
<svg class="a" style="left:855px;top:30px" width="8" height="7" viewBox="0 0 8 7"><path d="M3.600 1.200 V5.600 L0.800 3.400 Z M7.200 1.200 V5.600 L4.400 3.400 Z" fill="#dcdcdc"/></svg>
<svg class="a" style="left:1064px;top:30px" width="8" height="7" viewBox="0 0 8 7"><path d="M0.800 1.200 V5.600 L3.600 3.400 Z M4.400 1.200 V5.600 L7.200 3.400 Z" fill="#dcdcdc"/></svg>
<!-- section: object type -->
<div class="t" style="left:877px;top:69px;font-size:8px;font-weight:bold;color:#c4c4c4">椭圆</div>
<div class="sep" style="left:870px;top:88px;width:207px"></div>
<!-- section: transform -->
<div class="t" style="left:877px;top:94.500px;font-size:8px;font-weight:bold;color:#c4c4c4">变换</div>
<svg class="a" style="left:876px;top:125px" width="18" height="18" viewBox="876 125 18 18" fill="none" stroke="#cdcdcd" stroke-width="0.900">
<rect x="877.500" y="126.500" width="3" height="3"/><rect x="883.500" y="126.500" width="3" height="3"/><rect x="889.500" y="126.500" width="3" height="3"/>
<rect x="877.500" y="132.500" width="3" height="3"/><rect x="883.500" y="132.500" width="3" height="3"/><rect x="889.500" y="132.500" width="3" height="3"/>
<rect x="877.500" y="138.500" width="3" height="3"/><rect x="883.500" y="138.500" width="3" height="3" fill="#f4f4f4" stroke="#f4f4f4"/><rect x="889.500" y="138.500" width="3" height="3"/>
<path d="M880.500 128 H883.500 M886.500 128 H889.500 M880.500 134 H883.500 M886.500 134 H889.500 M880.500 140 H883.500 M886.500 140 H889.500 M879 129.500 V132.500 M879 135.500 V138.500 M885 129.500 V132.500 M885 135.500 V138.500 M891 129.500 V132.500 M891 135.500 V138.500" stroke-width="0.700"/>
</svg>
<div class="t sf" style="left:904.500px;top:116px;font-size:9.500px;color:#b4b4b4">X:</div>
<div class="fld" style="left:916px;top:115px;width:45px;height:15.500px"></div>
<div class="t sf" style="left:919px;top:115.500px;font-size:10.500px;color:#e4e4e4;word-spacing:2.400px">640.5 px</div>
<div class="t sf" style="left:904.500px;top:138px;font-size:9.500px;color:#b4b4b4">Y:</div>
<div class="fld" style="left:916px;top:137px;width:45px;height:15.500px;overflow:hidden"></div>
<div class="t sf" style="left:919px;top:137.500px;font-size:10.500px;color:#e4e4e4;word-spacing:2.400px;width:42px;overflow:hidden">1250.5 p</div>
<div class="t" style="left:975px;top:116.500px;font-size:9px;color:#b4b4b4;font-weight:bold">宽 :</div>
<div class="fld" style="left:992.500px;top:115px;width:44.500px;height:15.500px"></div>
<div class="t sf" style="left:995px;top:115.500px;font-size:10.500px;color:#e4e4e4;word-spacing:2.400px">690 px</div>
<div class="t" style="left:975px;top:138.500px;font-size:9px;color:#b4b4b4;font-weight:bold">高 :</div>
<div class="fld" style="left:992.500px;top:137px;width:44.500px;height:15.500px"></div>
<div class="t sf" style="left:995px;top:137.500px;font-size:10.500px;color:#e4e4e4;word-spacing:2.400px">690 px</div>
<svg class="a" style="left:1046px;top:126px" width="16" height="18" viewBox="1046 126 16 18" fill="none" stroke="#cdcdcd" stroke-width="1.300">
<path d="M1051 131.600 V130.600 a2.600 2.600 0 0 1 5.200 0 V132.400"/><path d="M1056.200 136.600 V138.400 a2.600 2.600 0 0 1 -5.200 0 V135.400"/><path d="M1048.600 128.400 L1059.400 140.800"/>
</svg>
<svg class="a" style="left:899px;top:161px" width="14" height="11" viewBox="899 161 14 11" fill="none" stroke="#cdcdcd" stroke-width="1.100"><path d="M909 163 L900.400 170 H911.600"/><path d="M905.200 166.200 A5 5 0 0 1 907.200 170"/></svg>
<div class="t sf" style="left:912px;top:160.500px;font-size:9.500px;color:#b4b4b4">:</div>
<div class="fld" style="left:916px;top:158.500px;width:29.500px;height:15.500px;border-radius:2px 0 0 2px"></div>
<div class="fld" style="left:946.500px;top:158.500px;width:14.500px;height:15.500px;border-radius:0 2px 2px 0;background:#4a4a4a"></div>
<div class="t sf" style="left:918.500px;top:158px;font-size:10.500px;color:#c8c8c8">0°</div>
<svg class="a" style="left:950px;top:163px" width="8" height="6" viewBox="0 0 8 6"><path d="M0.800 1 L4 4.200 L7.200 1" fill="none" stroke="#d8d8d8" stroke-width="1.500"/></svg>
<svg class="a" style="left:994px;top:160px" width="40" height="15" viewBox="994 160 40 15" fill="#cdcdcd">
<path d="M995.200 163 L999.600 167.200 L995.200 171.400 Z" fill="none" stroke="#cdcdcd" stroke-width="1"/><path d="M1006.800 163 L1002.400 167.200 L1006.800 171.400 Z"/><path d="M1001 162 V172.400" stroke="#cdcdcd" stroke-width="0.800" stroke-dasharray="1.200 1"/>
<path d="M1020.800 161.400 H1029.200 L1025 166 Z"/><path d="M1020.800 173 H1029.200 L1025 168.400 Z" fill="none" stroke="#cdcdcd" stroke-width="1"/><path d="M1019.600 167.200 H1030.400" stroke="#cdcdcd" stroke-width="0.800" stroke-dasharray="1.200 1"/>
</svg>
<svg class="a" style="left:1052px;top:183px" width="14" height="5" viewBox="0 0 14 5" fill="#d4d4d4"><circle cx="2.300" cy="2.500" r="1.450"/><circle cx="6.800" cy="2.500" r="1.450"/><circle cx="11.300" cy="2.500" r="1.450"/></svg>
<div class="sep" style="left:870px;top:196.500px;width:207px"></div>
<!-- section: appearance -->
<div class="t" style="left:877px;top:203.500px;font-size:8px;font-weight:bold;color:#c4c4c4">外观</div>
<svg class="a" style="left:877px;top:223px" width="16" height="64" viewBox="877 223 16 64">
<rect x="878" y="224" width="13.600" height="13.600" fill="#fff"/><path d="M878.300 237.300 L891.300 224.300" stroke="#e0191c" stroke-width="1.500"/>
<rect x="878" y="247.600" width="13.600" height="13.600" fill="#fff"/><rect x="882.600" y="252.200" width="4.400" height="4.400" fill="#3c3c3c"/>
<rect x="878.500" y="272.300" width="12.800" height="12.800" fill="#6e6e6e" stroke="#b8b8b8" stroke-width="1"/>
<g fill="#8e8e8e"><rect x="879" y="272.800" width="3" height="3"/><rect x="885" y="272.800" width="3" height="3"/><rect x="882" y="275.800" width="3" height="3"/><rect x="888" y="275.800" width="2.800" height="3"/><rect x="879" y="278.800" width="3" height="3"/><rect x="885" y="278.800" width="3" height="3"/><rect x="882" y="281.800" width="3" height="2.800"/><rect x="888" y="281.800" width="2.800" height="2.800"/></g>
</svg>
<div class="t" style="left:902px;top:224px;font-size:8px;font-weight:bold;color:#c4c4c4">填色</div>
<div class="t" style="left:902px;top:248px;font-size:8px;font-weight:bold;color:#e0e0e0;border-bottom:1px dotted #c0c0c0;height:13px;line-height:13px">描边</div>
<div class="fld" style="left:943.500px;top:247.500px;width:12.500px;height:14.500px;background:#4a4a4a;border-radius:2px 0 0 2px"></div>
<svg class="a" style="left:945px;top:249px" width="10" height="12" viewBox="0 0 10 12" fill="none" stroke="#d8d8d8" stroke-width="1.300"><path d="M1.800 4.400 L5 1.400 L8.200 4.400 M1.800 7.600 L5 10.600 L8.200 7.600"/></svg>
<div class="fld" style="left:957px;top:247.500px;width:27.500px;height:14.500px;border-radius:0"></div>
<div class="t sf" style="left:959.500px;top:247px;font-size:10.500px;color:#e4e4e4;word-spacing:2.800px">1 pt</div>
<div class="fld" style="left:985.500px;top:247.500px;width:13.500px;height:14.500px;background:#4a4a4a;border-radius:0 2px 2px 0"></div>
<svg class="a" style="left:988.500px;top:252px" width="8" height="6" viewBox="0 0 8 6"><path d="M0.800 1 L4 4.200 L7.200 1" fill="none" stroke="#d8d8d8" stroke-width="1.500"/></svg>
<div class="t" style="left:902px;top:272px;font-size:8px;font-weight:bold;color:#e0e0e0;border-bottom:1px dotted #c0c0c0;height:13px;line-height:13px">不透明度</div>
<div class="fld" style="left:943.500px;top:271.500px;width:41px;height:14.500px;border-radius:2px 0 0 2px"></div>
<div class="t sf" style="left:946px;top:271px;font-size:10.500px;color:#e4e4e4;letter-spacing:-1.200px">100%</div>
<div class="fld" style="left:985.500px;top:271.500px;width:13.500px;height:14.500px;background:#4a4a4a;border-radius:0 2px 2px 0"></div>
<svg class="a" style="left:989.500px;top:274.500px" width="6" height="9" viewBox="0 0 6 9"><path d="M1.200 1 L4.600 4.400 L1.200 7.800" fill="none" stroke="#d8d8d8" stroke-width="1.500"/></svg>
<div class="t sf" style="left:881.500px;top:295px;font-size:13px;font-style:italic;color:#c8c8c8;letter-spacing:-0.500px">fx.</div>
<svg class="a" style="left:1052px;top:320px" width="14" height="5" viewBox="0 0 14 5" fill="#d4d4d4"><circle cx="2.300" cy="2.500" r="1.450"/><circle cx="6.800" cy="2.500" r="1.450"/><circle cx="11.300" cy="2.500" r="1.450"/></svg>
<div class="sep" style="left:870px;top:332.500px;width:207px"></div>
<!-- section: quick actions -->
<div class="t" style="left:877px;top:343.500px;font-size:8px;font-weight:bold;color:#c4c4c4">快速操作</div>
<div class="btn" style="left:877px;top:362px;width:83px">位移路径</div>
<div class="btn" style="left:968px;top:362px;width:83.500px">扩展形状</div>
<div class="btn" style="left:877px;top:388px;width:83px">排列</div>
<div class="btn" style="left:968px;top:388px;width:83.500px">对齐像素网格</div>
<div class="btn" style="left:877px;top:413.500px;width:174.500px">重新着色</div>
</div>

<!-- ============ WATERMARK ============ -->

<svg class="a" style="left:915px;top:662px" width="50" height="44" viewBox="915 662 50 44">
<g fill="#e9e9e9">
<ellipse cx="932.800" cy="678.800" rx="14.200" ry="12.700"/>
<path d="M924 688.500 L921.800 694.200 L929.500 690.800 Z"/>
</g>
<ellipse cx="947" cy="689.200" rx="13.800" ry="12.400" fill="#535353"/>
<g fill="#e9e9e9">
<ellipse cx="947" cy="689.200" rx="12.200" ry="10.800"/>
<path d="M951.500 698.200 L956.200 701.600 L955 696 Z"/>
</g>
<g fill="#4a4a4a"><circle cx="927.500" cy="675.300" r="1.800"/><circle cx="938.800" cy="675.300" r="1.800"/><circle cx="942.500" cy="685.400" r="1.500"/><circle cx="951.300" cy="685.400" r="1.500"/></g>
</svg>
<div class="t" style="left:965px;top:669px;font-size:25.800px;line-height:32px;height:32px;color:#f2f2f2">野鹿志</div>


<!-- ============ DIALOG ============ -->
<div id="dlg" class="a">
<div id="dlgtitle" class="a"></div>

</div>


<div id="dlgC" class="a" style="left:0;top:0;width:1080px;height:733px">
<div class="t" style="left:556px;top:256.500px;font-family:'Liberation Sans',sans-serif;font-size:10px;font-weight:normal;color:#111">比例缩放</div>
<!-- group 1 -->
<div class="gb" style="left:562px;top:300px;width:246px;height:116px"></div>
<div class="t" style="left:569.500px;top:293.500px;background:#535353;padding:0 2px;font-weight:normal;color:#b4b4b4">比例缩放</div>
<svg class="a" style="left:570px;top:316px" width="13" height="36" viewBox="570 316 13 36">
<circle cx="576.300" cy="322.200" r="4.700" fill="#d2d2d2"/><circle cx="576.300" cy="322.200" r="1.700" fill="#3c3c3c"/>
<circle cx="576.300" cy="345.800" r="4.200" fill="none" stroke="#d8d8d8" stroke-width="1.200"/>
</svg>
<div class="t" style="left:585.800px;top:315px">等比<span class="hw"> (U):</span></div>
<div class="a" style="left:634px;top:313.500px;width:54px;height:17px;background:#fff;border:1px solid #79b0e8;border-radius:2px"></div>
<div class="a" style="left:638.300px;top:315px;width:12.500px;height:11px;background:#0c64cf"></div>
<div class="t" style="left:639px;top:313.500px;color:#fff;font-weight:normal"><span class="hw" style="font-size:10.500px">1%</span></div>
<div class="t" style="left:585.800px;top:338.800px">不等比<span class="hw"> (N)</span></div>
<div class="t" style="left:586.200px;top:362.300px;font-weight:normal;color:#a6a6a6">水平<span class="hw"> (H):</span></div>
<div class="fld" style="left:634.500px;top:360.800px;width:52.500px;height:15px;background:#424242"></div>
<div class="t" style="left:639px;top:360.800px;font-weight:normal;color:#e0e0e0"><span class="hw" style="font-size:10.500px">1%</span></div>
<div class="t" style="left:586.200px;top:388.300px;font-weight:normal;color:#a6a6a6">垂直<span class="hw"> (V):</span></div>
<div class="fld" style="left:634.500px;top:386.700px;width:52.500px;height:15px;background:#424242"></div>
<div class="t" style="left:639px;top:386.700px;font-weight:normal;color:#e0e0e0"><span class="hw" style="font-size:10.500px">1%</span></div>
<!-- group 2 -->
<div class="gb" style="left:562px;top:434px;width:246px;height:78px"></div>
<div class="t" style="left:568.800px;top:426.800px;background:#535353;padding:0 2px;font-weight:normal;color:#d8d8d8">选项</div>
<div class="cb" style="left:571px;top:448px"></div>
<div class="t" style="left:585.800px;top:446px">缩放圆角<span class="hw"> (S)</span></div>
<div class="cb" style="left:571px;top:468.500px"></div>
<div class="t" style="left:585.800px;top:466.600px;letter-spacing:0.300px">比例缩放描边和效果<span class="hw"> (E)</span></div>
<div class="cb" style="left:571px;top:489px;border-color:#787878;background:#787878"></div>
<svg class="a" style="left:571px;top:489px" width="10" height="10" viewBox="0 0 10 10"><path d="M2.200 5 L4.200 7.200 L7.800 2.600" fill="none" stroke="#555" stroke-width="1.400"/></svg>
<div class="t" style="left:585.800px;top:487px;color:#727272;font-weight:normal">变换对象<span class="hw"> (O)</span></div>
<div class="cb" style="left:656.300px;top:489px;border-color:#707070"></div>
<div class="t" style="left:671.300px;top:487px;color:#727272;font-weight:normal">变换图案<span class="hw"> (T)</span></div>
<!-- preview -->
<div class="cb" style="left:562.800px;top:527px;border-color:#d2d2d2;background:#d2d2d2;border-radius:1px"></div>
<svg class="a" style="left:562.800px;top:527px" width="10" height="10" viewBox="0 0 10 10"><path d="M2.200 5 L4.200 7.200 L7.800 2.600" fill="none" stroke="#444" stroke-width="1.500"/></svg>
<div class="t" style="left:577.800px;top:525px">预览<span class="hw"> (P)</span></div>
<!-- buttons -->
<div class="pill" style="left:562px;top:556.300px;width:76px">复制<span class="hw"> (C)</span></div>
<div class="pill" style="left:650.500px;top:556px;width:76.500px;border-width:2px;border-color:#f6f6f6;line-height:18px;height:22px">确定</div>
<div class="pill" style="left:731px;top:556.300px;width:76.500px">取消</div>
</div>

<!-- ============ ANNOTATIONS ============ -->

<div class="a" style="left:566.500px;top:297.800px;width:129.500px;height:41.500px;border:2.200px solid #d31f1e"></div>
<div class="a" style="left:554.300px;top:546.600px;width:91.200px;height:40.400px;border:2.400px solid #d31f1e"></div>
<svg class="a" style="left:535px;top:570px" width="60" height="75" viewBox="535 570 60 75"><path d="M542.300 636.700 L579.600 583" stroke="#e0141a" stroke-width="2.400" fill="none"/><path d="M583.600 576.800 L585.200 586.600 L575.200 583.600 Z" fill="#e0141a"/></svg>


<!-- window frame -->
<div class="a" style="left:0;top:0;width:1080px;height:1px;background:#3c3c3c"></div>
<div class="a" style="left:0;top:0;width:3.300px;height:733px;background:#3f3f3f"></div>
<div class="a" style="left:0;top:1px;width:1.200px;height:732px;background:#505050"></div>
<div class="a" style="left:0;top:728.500px;width:1080px;height:1.800px;background:#3f3f3f"></div>
<div class="a" style="left:0;top:730.300px;width:1080px;height:2.700px;background:#4c4c4c"></div>
<div class="a" style="left:0;top:0;width:2px;height:2px;background:#d0d0d0;border-radius:0 0 2px 0"></div>
<div class="a" style="left:1078px;top:0;width:2px;height:2px;background:#d0d0d0;border-radius:0 0 0 2px"></div>
</div>
</body>
</html>
